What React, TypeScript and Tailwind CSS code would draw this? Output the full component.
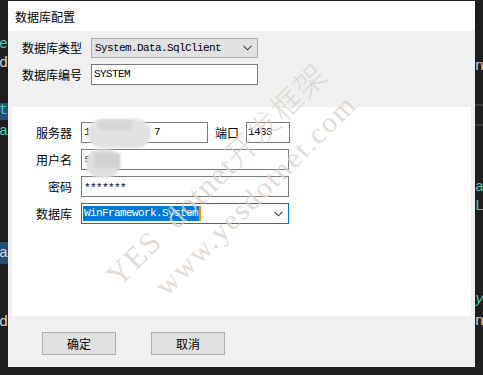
import React from "react";

const cjk = { fontFamily: '"Noto Sans CJK SC", "Microsoft YaHei", sans-serif' };
const mono = { fontFamily: '"Liberation Mono", "DejaVu Sans Mono", monospace' };

function Chevron() {
  return (
    <svg width="9" height="6" viewBox="0 0 9 6" className="shrink-0">
      <path d="M0.5 0.8 L4.5 4.8 L8.5 0.8" fill="none" stroke="#404040" strokeWidth="1.1" />
    </svg>
  );
}

export default function App() {
  return (
    <div className="relative w-[483px] h-[375px] bg-[#1e1e1e] overflow-hidden pt-px pl-2" style={cjk}>
      {/* editor fragments behind the dialog */}
      <span className="absolute left-[-1px] top-[37px] text-[15px] leading-none text-[#4ec9b0]" style={mono}>e</span>
      <span className="absolute left-[-1px] top-[56px] text-[15px] leading-none text-[#d4d4d4]" style={mono}>d</span>
      <div className="absolute left-0 top-[103px] w-[8px] h-[17px] bg-[#264f78]" />
      <span className="absolute left-[-1px] top-[103px] text-[15px] leading-none text-[#4ec9b0]" style={mono}>t</span>
      <span className="absolute left-[-1px] top-[124px] text-[15px] leading-none text-[#4ec9b0]" style={mono}>a</span>
      <div className="absolute left-0 top-[242px] w-[8px] h-[22px] bg-[#264f78]" />
      <span className="absolute left-[-1px] top-[246px] text-[15px] leading-none text-[#d4d4d4]" style={mono}>a</span>
      <span className="absolute left-[-1px] top-[315px] text-[15px] leading-none text-[#d4d4d4]" style={mono}>d</span>

      <span className="absolute left-[475px] top-[59px] text-[15px] leading-none text-[#d4d4d4]" style={mono}>n</span>
      <div className="absolute left-[475px] top-[104px] w-[8px] h-[2px] bg-[#3a3a3a]" />
      <div className="absolute left-[475px] top-[124px] w-[8px] h-[2px] bg-[#3a3a3a]" />
      <span className="absolute left-[475px] top-[180px] text-[15px] leading-none text-[#4ec9b0]" style={mono}>a</span>
      <span className="absolute left-[475px] top-[199px] text-[15px] leading-none text-[#4ec9b0]" style={mono}>L</span>
      <span className="absolute left-[475px] top-[292px] text-[15px] leading-none italic text-[#4ec9b0]" style={mono}>y</span>
      <span className="absolute left-[475px] top-[314px] text-[15px] leading-none text-[#d4d4d4]" style={mono}>n</span>

      {/* dialog */}
      <div className="relative w-[467px] h-[366px] bg-[#f0f0f0] flex flex-col text-[12px] text-black">
        <div className="h-[30px] bg-white flex items-center pl-[7px] pt-px">数据库配置</div>

        <div className="pl-[14px] pt-[7px] flex flex-col gap-[6px]">
          <div className="flex items-center h-[20px]">
            <span className="w-[69px] leading-none">数据库类型</span>
            <div className="w-[167px] h-[20px] bg-[#e1e1e1] border border-[#adadad] flex items-center justify-between pl-[3px] pr-[5px]">
              <span className="text-[11px] tracking-[-0.6px] leading-none" style={mono}>System.Data.SqlClient</span>
              <Chevron />
            </div>
          </div>
          <div className="flex items-center h-[21px]">
            <span className="w-[69px] leading-none">数据库编号</span>
            <div className="w-[167px] h-[21px] bg-white border border-[#7a7a7a] flex items-center pl-[2px]">
              <span className="text-[11px] tracking-[-0.6px] leading-none" style={mono}>SYSTEM</span>
            </div>
          </div>
        </div>

        <div className="mx-[4px] mt-[22px] h-[209px] bg-white pt-[15px] flex flex-col gap-[6px]">
          <div className="flex items-center h-[21px]">
            <span className="w-[60px] text-right leading-none">服务器</span>
            <div className="ml-[9px] w-[127px] h-[21px] border border-[#7a7a7a] flex items-center pl-[2px] relative">
              <span className="text-[11px] tracking-[-0.6px] leading-none" style={mono}>1</span>
              <span className="absolute left-[72px] text-[11px] leading-none" style={mono}>7</span>
              <div className="absolute left-[6px] top-[-4px] w-[63px] h-[29px] rounded-[14px] bg-[#e2e2e2] blur-[1px]" />
              <div className="absolute left-[16px] top-[-3px] w-[34px] h-[10px] bg-[#d6d6d6] blur-[1px]" />
            </div>
            <span className="ml-[7px] w-[24px] leading-none">端口</span>
            <div className="ml-[7px] w-[44px] h-[21px] border border-[#7a7a7a] flex items-center pl-[1px]">
              <span className="text-[11px] tracking-[-0.6px] leading-none" style={mono}>1433</span>
            </div>
          </div>
          <div className="flex items-center h-[21px]">
            <span className="w-[60px] text-right leading-none">用户名</span>
            <div className="ml-[9px] w-[208px] h-[21px] border border-[#7a7a7a] flex items-center pl-[2px] relative">
              <span className="text-[11px] leading-none" style={mono}>s</span>
              <div className="absolute left-[4px] top-[-1px] w-[34px] h-[29px] rounded-[14px] bg-[#e0e0e0] blur-[1px]" />
              <div className="absolute left-[12px] top-[3px] w-[26px] h-[15px] bg-[#d2d2d2] blur-[1px]" />
            </div>
          </div>
          <div className="flex items-center h-[21px]">
            <span className="w-[60px] text-right leading-none">密码</span>
            <div className="ml-[9px] w-[208px] h-[21px] border border-[#7a7a7a] flex items-center pl-[2px]">
              <span className="text-[11px] tracking-[-0.6px] leading-none pt-[3px]" style={mono}>*******</span>
            </div>
          </div>
          <div className="flex items-center h-[21px]">
            <span className="w-[60px] text-right leading-none">数据库</span>
            <div className="ml-[9px] w-[208px] h-[21px] border border-[#0078d7] flex items-center justify-between pl-[1px] pr-[5px]">
              <div className="flex items-center">
                <span className="bg-[#0078d7] text-white text-[11px] tracking-[-0.6px] leading-none px-px py-[2px]" style={mono}>WinFramework.System</span>
                <span className="w-[2px] h-[15px] bg-[#ff8c00]" />
              </div>
              <Chevron />
            </div>
          </div>
        </div>

        <div className="flex pl-[34px] pt-[16px] gap-[35px]">
          <button className="w-[74px] h-[23px] bg-[#e1e1e1] border border-[#adadad] flex items-center justify-center leading-none">确定</button>
          <button className="w-[74px] h-[23px] bg-[#e1e1e1] border border-[#adadad] flex items-center justify-center leading-none">取消</button>
        </div>

        {/* watermark */}
        <span
          className="pointer-events-none absolute left-[209px] top-[174px] -translate-x-1/2 -translate-y-1/2 rotate-[-45deg] whitespace-pre text-[31px] leading-none tracking-[1.5px] text-[#d9d2cb]/80"
          style={{ fontFamily: '"Liberation Serif", "Noto Sans CJK SC", serif', fontWeight: 300 }}
        >
          YES  dotnet开发框架
        </span>
        <span
          className="pointer-events-none absolute left-[248px] top-[194px] -translate-x-1/2 -translate-y-1/2 rotate-[-45deg] whitespace-pre text-[29px] leading-none tracking-[2px] text-[#d9d2cb]/80"
          style={{ fontFamily: '"Liberation Serif", serif' }}
        >
          www.yesdotnet.com
        </span>
      </div>
    </div>
  );
}
